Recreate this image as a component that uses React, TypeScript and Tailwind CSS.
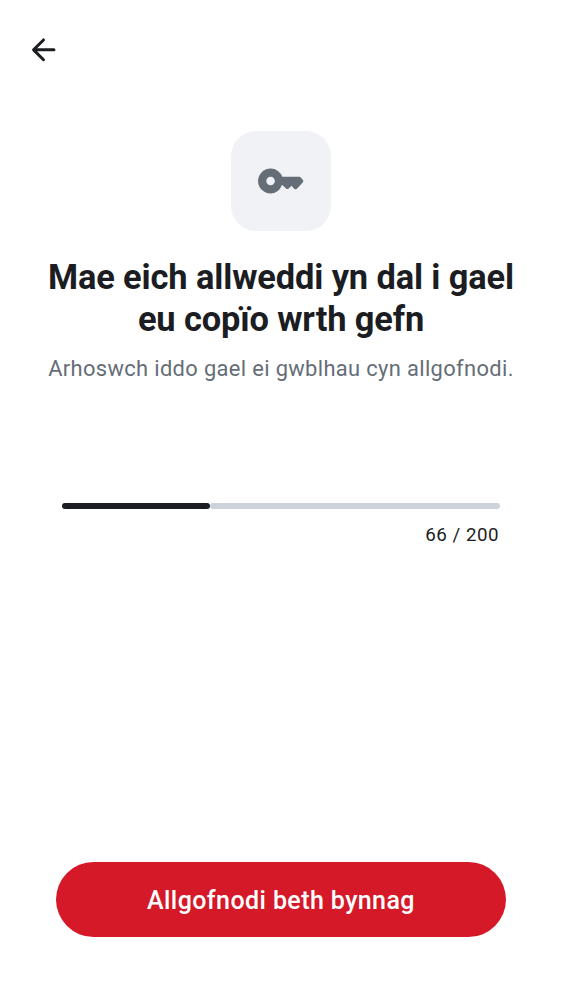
export default function App() {
  return (
    <main className="flex h-[1000px] w-[562px] flex-col bg-white font-['Roboto',sans-serif] text-[#1b1d22]">
      <header className="flex h-[100px] items-center pl-[26px]">
        <button aria-label="Yn ôl" className="size-[36px]">
          <svg viewBox="0.35 0.1 24 24" className="size-full" fill="currentColor">
            <path d="m12.7 17.9-4.9-4.9H19a1 1 0 1 0 0-2H7.8l4.9-4.9a.98.98 0 0 0 0-1.4.98.98 0 0 0-1.4 0l-6.6 6.6a.97.97 0 0 0 0 1.4l6.6 6.6a.98.98 0 0 0 1.4 0 .98.98 0 0 0 0-1.4" />
          </svg>
        </button>
      </header>
      <section className="mt-[31px] flex flex-col items-center text-center">
        <div className="flex size-[100px] items-center justify-center rounded-[25px] bg-[#f0f2f5]">
          <svg viewBox="0 0 24 24" className="size-[50px]" fill="#656d77">
            <path fillRule="evenodd" d="M7 18q-2.5 0-4.25-1.75T1 12t1.75-4.25T7 6q2.025 0 3.538 1.15T12.65 10h8.1q.22 0 .39.07t.33.23l.95 1.05q.14.14.21.32t.07.36-.07.34-.19.32l-2.8 3.07a.9.9 0 0 1-.67.23 1 1 0 0 1-.37-.06 1 1 0 0 1-.33-.21L17.1 14.3l-1.4 1.3a.97.97 0 0 1-1.3 0L12.8 14h-.4q-.65 1.8-2.125 2.9T7 18m0-3.95A2.05 2.05 0 1 0 7 9.95a2.05 2.05 0 0 0 0 4.1" />
          </svg>
        </div>
        <h1 className="mt-[25px] text-[34.4px] leading-[42px] font-bold tracking-[-0.12px] whitespace-nowrap">
          Mae eich allweddi yn dal i gael<br />eu copïo wrth gefn
        </h1>
        <p className="mt-[13px] text-[21.9px] leading-[31px] tracking-[0.35px] whitespace-nowrap text-[#656d77]">
          Arhoswch iddo gael ei gwblhau cyn allgofnodi.
        </p>
      </section>
      <section className="mx-[62px] mt-[119px]">
        <div className="flex h-[6.25px] w-[437.5px]">
          <div className="w-[148px] rounded-full bg-[#1b1d22]" />
          <div className="flex-1 rounded-full bg-[#cdd3da]" />
        </div>
        <p className="mt-[14px] pr-[1px] text-right text-[18.75px] leading-[25px] tracking-[0.5px]">66 / 200</p>
      </section>
      <button className="mx-[56px] mt-auto mb-[63px] h-[75px] rounded-full bg-[#d51928] pt-[2px] text-[25px] font-medium tracking-[0.41px] text-white">
        Allgofnodi beth bynnag
      </button>
    </main>
  );
}
